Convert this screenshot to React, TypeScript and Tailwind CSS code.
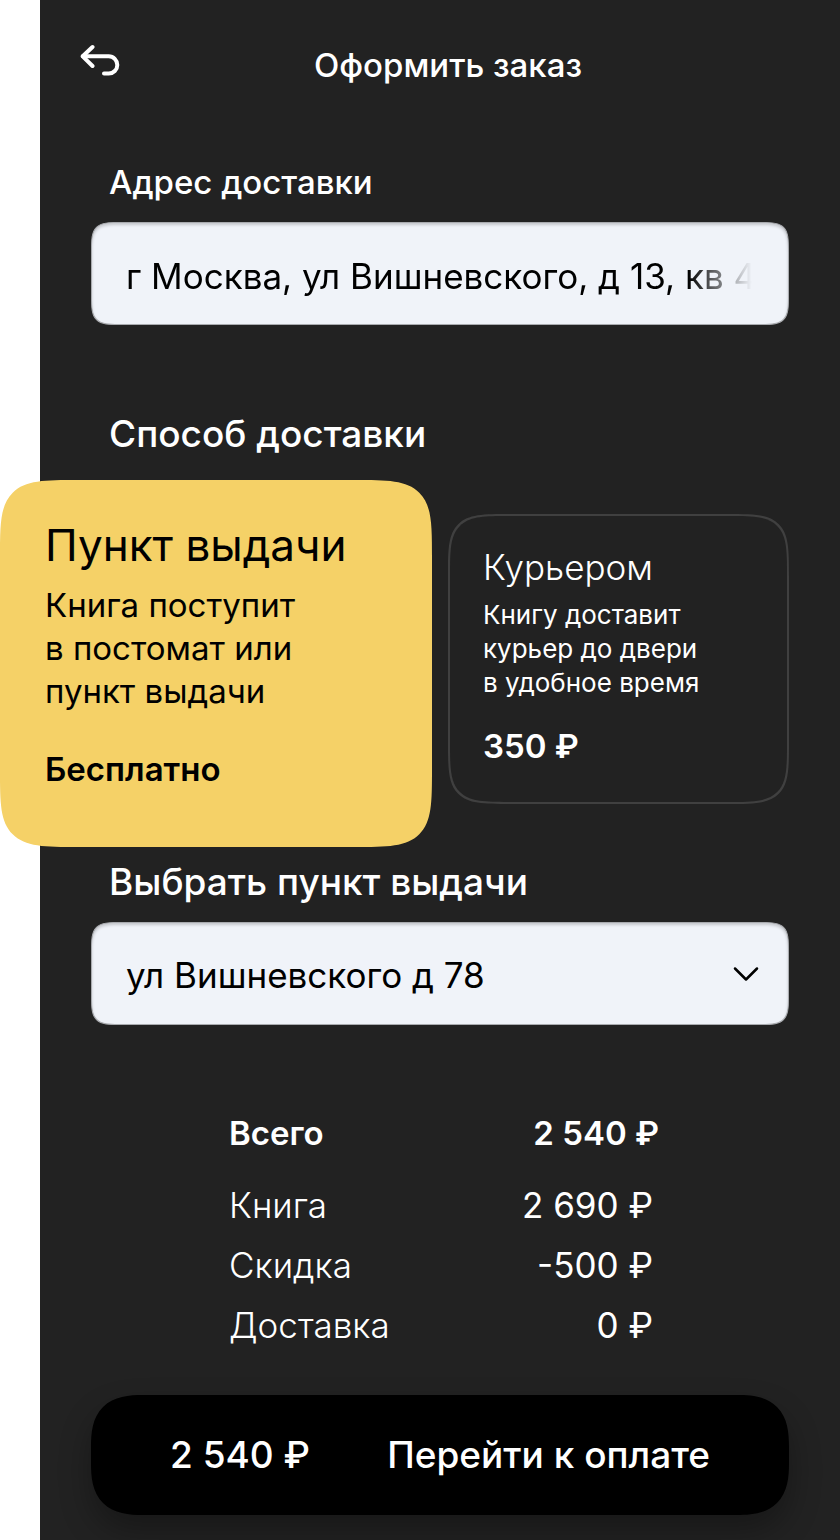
import { ReactNode, useState } from 'react';

interface FieldProps {
  id: string;
  label: string;
  labelClass: string;
  children: ReactNode;
}

function Field({ id, label, labelClass, children }: FieldProps) {
  return (
    <div className="mx-[51px]">
      <label htmlFor={id} className={`block pl-[18px] font-medium leading-10 ${labelClass}`}>
        {label}
      </label>
      <div className="mt-5 grid h-[103px] items-center rounded-[32px] border border-[#a9abaf] bg-[#f0f3f9] text-[35px] text-black shadow-[inset_0_2px_3px_rgba(0,0,0,0.18)] [corner-shape:squircle]">
        {children}
      </div>
    </div>
  );
}

interface MethodProps {
  value: string;
  checked: boolean;
  onChange: (value: string) => void;
  className: string;
  children: ReactNode;
}

function Method({ value, checked, onChange, className, children }: MethodProps) {
  return (
    <label className={`block cursor-pointer [corner-shape:squircle] ${className}`}>
      <input
        type="radio"
        name="method"
        value={value}
        checked={checked}
        onChange={() => onChange(value)}
        className="sr-only"
      />
      {children}
    </label>
  );
}

const rows = [
  { label: 'Книга', value: '2 690 ₽' },
  { label: 'Скидка', value: '-500 ₽' },
  { label: 'Доставка', value: '0 ₽' },
];

export default function App() {
  const [address, setAddress] = useState('г Москва, ул Вишневского, д 13, кв 4');
  const [method, setMethod] = useState('pickup');

  return (
    <div className="bg-white pl-10 font-['Inter','Liberation_Sans',sans-serif]">
      <main className="bg-[#222222] pb-[25px] text-white">
        <header className="grid grid-cols-[1fr_auto_1fr] items-start pt-10 pr-6 pl-10">
          <button type="button" aria-label="Назад" className="w-10 cursor-pointer">
            <svg
              viewBox="0 0 40 40"
              className="h-10 w-10"
              fill="none"
              stroke="white"
              strokeWidth="4"
              strokeLinecap="round"
              strokeLinejoin="round"
            >
              <path d="M12.5 7 L2.7 16.3 L12.5 26" />
              <path d="M3 16.3 H28.7 A8.6 8.6 0 0 1 28.7 33.5 H24" />
            </svg>
          </button>
          <h1 className="text-[33px] font-medium leading-[50px]">Оформить заказ</h1>
        </header>

        <div className="mt-[72px]">
          <Field id="address" label="Адрес доставки" labelClass="text-[33px]">
            <input
              id="address"
              type="text"
              value={address}
              onChange={(e) => setAddress(e.target.value)}
              className="mr-9 ml-[34px] h-full min-w-0 bg-transparent pt-1 outline-none [mask-image:linear-gradient(to_right,black_calc(100%-64px),transparent)]"
            />
          </Field>
        </div>

        <fieldset className="mt-[89px]">
          <legend className="pl-[69px] text-[37px] font-medium leading-10">Способ доставки</legend>
          <div className="-ml-10 mt-[26px] grid grid-cols-[432fr_341fr] items-start gap-4 pr-[51px]">
            <Method
              value="pickup"
              checked={method === 'pickup'}
              onChange={setMethod}
              className="relative rounded-[80px] bg-[#f5d167] px-[45px] pt-[39px] pb-[58px] text-black"
            >
              <span className="block text-[44px] leading-[52px]">Пункт выдачи</span>
              <span className="mt-[13px] block text-[33px] leading-[43px]">
                Книга поступит
                <br />
                в постомат или
                <br />
                пункт выдачи
              </span>
              <span className="mt-9 block text-[33px] font-semibold leading-10">Бесплатно</span>
            </Method>
            <Method
              value="courier"
              checked={method === 'courier'}
              onChange={setMethod}
              className="relative mt-[34px] rounded-[64px] border-2 border-[#404040] px-[33px] pt-[31px] pb-9 text-white"
            >
              <span className="block text-[35px] font-light leading-10">Курьером</span>
              <span className="mt-[11px] block text-[26px] leading-[34px]">
                Книгу доставит
                <br />
                курьер до двери
                <br />
                в удобное время
              </span>
              <span className="mt-[26px] block text-[33px] font-semibold leading-10">350 ₽</span>
            </Method>
          </div>
        </fieldset>

        <div className="mt-[15px]">
          <Field id="point" label="Выбрать пункт выдачи" labelClass="text-[37px]">
            <select
              id="point"
              className="col-start-1 row-start-1 h-full min-w-0 cursor-pointer appearance-none bg-transparent pt-1 pr-20 pl-[34px] outline-none"
            >
              <option>ул Вишневского д 78</option>
            </select>
            <svg
              viewBox="0 0 26 16"
              className="pointer-events-none relative col-start-1 row-start-1 mr-[29px] h-4 w-[26px] justify-self-end"
              fill="none"
              stroke="black"
              strokeWidth="2.5"
              strokeLinecap="round"
              strokeLinejoin="round"
            >
              <path d="M2 2.5 L13 13.5 L24 2.5" />
            </svg>
          </Field>
        </div>

        <dl className="mt-[88px] pr-[181px] pl-[189px]">
          <div className="flex justify-between text-[33px] font-semibold leading-10">
            <dt>Всего</dt>
            <dd>2 540 ₽</dd>
          </div>
          <div className="mt-[22px] pr-1.5 text-[35px] leading-[60px]">
            {rows.map((row) => (
              <div key={row.label} className="flex justify-between">
                <dt className="font-light">{row.label}</dt>
                <dd>{row.value}</dd>
              </div>
            ))}
          </div>
        </dl>

        <div className="mx-[51px] mt-10">
          <button
            type="button"
            className="flex h-[120px] w-full cursor-pointer items-center justify-between rounded-[52px] bg-black px-[79px] text-[37px] font-medium shadow-[0_16px_32px_rgba(0,0,0,0.3)] [corner-shape:superellipse(1.4)]"
          >
            <span>2 540 ₽</span>
            <span>Перейти к оплате</span>
          </button>
        </div>
      </main>
    </div>
  );
}
